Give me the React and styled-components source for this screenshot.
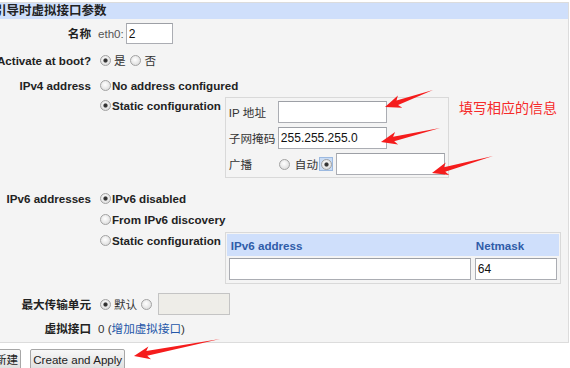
import React from 'react';
import styled, { createGlobalStyle, css } from 'styled-components';

const GlobalStyle = createGlobalStyle`
  html, body { margin: 0; padding: 0; background: #fff; }
  body {
    font-family: "Liberation Sans", Arial, "Noto Sans CJK SC", sans-serif;
    font-size: 11.6px;
    color: #222;
    overflow: hidden;
  }
  * { box-sizing: border-box; }
`;

const Page = styled.div`
  position: relative;
  width: 570px;
  height: 368px;
  overflow: hidden;
  padding-top: 2px;
`;

const Panel = styled.section`
  margin-left: -8px;
  width: 577px;
  border: 1px solid #dcdcdc;
  background: #f4f4f4;
`;

const Header = styled.div`
  height: 16px;
  line-height: 16px;
  background: #cfdffb;
  font-weight: bold;
  font-size: 12.5px;
  padding-left: 1px;
  white-space: nowrap;
  color: #222;
`;

const Row = styled.div`
  display: flex;
  align-items: ${p => p.$align || 'center'};
  padding: ${p => p.$pt ?? 4}px 0 ${p => p.$pb ?? 4}px;
`;

const Label = styled.div`
  width: 98px;
  flex-shrink: 0;
  display: flex;
  justify-content: flex-end;
  font-weight: bold;
  white-space: nowrap;
  line-height: 17px;
  color: #222;
`;

const Value = styled.div`
  margin-left: 7px;
  display: flex;
  align-items: ${p => p.$align || 'center'};
  line-height: 17px;
  white-space: nowrap;
`;

const Options = styled.div`
  display: flex;
  flex-direction: column;
  gap: ${p => p.$gap}px;
`;

const Option = styled.div`
  display: flex;
  align-items: ${p => p.$top ? 'flex-start' : 'center'};
  line-height: 17px;
  font-weight: ${p => p.$bold ? 'bold' : 'normal'};
`;

const OptionText = styled.span`
  display: inline-flex;
  align-items: center;
  height: 17px;
`;

const Radio = styled.input.attrs({ type: 'radio', readOnly: true })`
  appearance: none;
  -webkit-appearance: none;
  width: 11px;
  height: 11px;
  margin: 0 ${p => p.$mr ?? 2}px 0 ${p => p.$ml ?? 2}px;
  border-radius: 50%;
  border: 1px solid #a2a2a2;
  flex-shrink: 0;
  background: radial-gradient(circle at 45% 40%, #ffffff 0, #f0f0f0 35%, #d4d4d4 100%);
  ${p => p.checked && css`
    background:
      radial-gradient(circle, #2b2b2b 0, #3a3a3a 1.6px, rgba(60,60,60,0) 2.6px),
      radial-gradient(circle at 45% 40%, #ffffff 0, #f0f0f0 35%, #d4d4d4 100%);
  `}
`;

const Focus = styled.span`
  display: inline-flex;
  align-items: center;
  justify-content: center;
  width: 14px;
  height: 14px;
  background: #c9dcf5;
  border: 1px solid #9cb9e0;
  margin-left: ${p => p.$ml}px;
`;

const Plain = styled.span`
  font-weight: normal;
  color: ${p => p.$color || '#333'};
  margin-left: ${p => p.$ml ?? 0}px;
  margin-right: ${p => p.$mr ?? 0}px;
`;

const Field = styled.input.attrs({ readOnly: true })`
  width: ${p => p.$w}px;
  height: ${p => p.$h ?? 22}px;
  margin: 0;
  margin-left: ${p => p.$ml ?? 0}px;
  padding: 0 2px;
  border: 1px solid #abadb3;
  border-top-color: #9da0a6;
  background: ${p => p.$disabled ? '#eeede8' : '#fff'};
  ${p => p.$disabled && css`border-color: #c4c4c4;`}
  font: inherit;
  font-size: 12px;
  color: #111;
  outline: none;
  justify-self: start;
`;

const V4Box = styled.div`
  display: grid;
  grid-template-columns: 49px auto;
  row-gap: 4px;
  align-items: center;
  margin-left: 4px;
  padding: 3px 3px 2px 3px;
  border: 1px solid #d9d9d9;
  font-weight: normal;
  color: #333;
`;

const BoxLabel = styled.span`
  line-height: 17px;
`;

const BcastCell = styled.div`
  display: flex;
  align-items: center;
`;

const V6Box = styled.div`
  margin-left: 4px;
  padding: 1px;
  border: 1px solid #d9d9d9;
  font-weight: normal;
`;

const V6Head = styled.div`
  display: grid;
  grid-template-columns: 249px 1fr;
  height: 22px;
  align-items: center;
  background: #cfdffb;
  color: #2f5ca8;
  font-weight: bold;
`;

const HeadCell = styled.span`
  padding-left: ${p => p.$pl}px;
`;

const V6Inputs = styled.div`
  display: grid;
  grid-template-columns: 242px 82px;
  column-gap: 4px;
  padding: 2px;
`;

const Link = styled.a`
  color: #2456a8;
  text-decoration: none;
`;

const ButtonRow = styled.div`
  display: flex;
  gap: 9px;
  margin-top: 6px;
  margin-left: -8px;
`;

const Button = styled.button`
  height: 22px;
  padding: 0 2px;
  border: 1px solid #a7a7a7;
  border-radius: 2px;
  background: linear-gradient(#f7f7f7, #dedede);
  font: inherit;
  font-size: 11.6px;
  color: #222;
  line-height: 20px;
`;

const Note = styled.div`
  position: absolute;
  left: 459px;
  top: 97px;
  font-family: "Noto Sans CJK SC", sans-serif;
  font-size: 14px;
  line-height: 20px;
  color: #f62a2a;
  white-space: nowrap;
`;

const Overlay = styled.svg`
  position: absolute;
  left: 0;
  top: 0;
  pointer-events: none;
`;

function arrowPoints(tx, ty, px, py) {
  const dx = px - tx, dy = py - ty;
  const L = Math.hypot(dx, dy);
  const ux = dx / L, uy = dy / L;
  const nx = -uy, ny = ux;
  const at = (d, w) => [tx + ux * d + nx * w, ty + uy * d + ny * w];
  const pts = [
    [tx, ty],
    at(L - 13, 2.4),
    at(L - 16, 6.5),
    [px, py],
    at(L - 16, -6.5),
    at(L - 13, -2.4),
  ];
  return pts.map(p => p.map(v => v.toFixed(1)).join(',')).join(' ');
}

const arrows = [
  [433, 90, 385, 107],
  [440, 128, 381, 142],
  [493, 156, 432, 173],
  [220, 339, 134, 356],
];

export default function App() {
  return (
    <Page>
      <GlobalStyle />
      <Panel>
        <Header>引导时虚拟接口参数</Header>

        <Row>
          <Label>名称</Label>
          <Value>
            <Plain $color="#555" $mr={2}>eth0:</Plain>
            <Field $w={47} $h={21} defaultValue="2" />
          </Value>
        </Row>

        <Row>
          <Label>Activate at boot?</Label>
          <Value>
            <Radio checked />
            <Plain $ml={1}>是</Plain>
            <Radio $ml={4} />
            <Plain $ml={2}>否</Plain>
          </Value>
        </Row>

        <Row $align="flex-start">
          <Label>IPv4 address</Label>
          <Value $align="flex-start">
            <Options $gap={3}>
              <Option $bold>
                <Radio $mr={1} />
                <OptionText>No address configured</OptionText>
              </Option>
              <Option $bold $top>
                <OptionText>
                  <Radio $mr={1} checked />
                  Static configuration
                </OptionText>
                <V4Box>
                  <BoxLabel>IP 地址</BoxLabel>
                  <Field $w={109} defaultValue="" />
                  <BoxLabel>子网掩码</BoxLabel>
                  <Field $w={109} defaultValue="255.255.255.0" />
                  <BoxLabel>广播</BoxLabel>
                  <BcastCell>
                    <Radio $ml={1} $mr={0} />
                    <Plain $ml={5}>自动</Plain>
                    <Focus $ml={1}>
                      <Radio $ml={0} $mr={0} checked />
                    </Focus>
                    <Field $w={109} $ml={3} defaultValue="" />
                  </BcastCell>
                </V4Box>
              </Option>
            </Options>
          </Value>
        </Row>

        <Row $align="flex-start" $pt={8}>
          <Label>IPv6 addresses</Label>
          <Value $align="flex-start">
            <Options $gap={4}>
              <Option $bold>
                <Radio $mr={1} checked />
                <OptionText>IPv6 disabled</OptionText>
              </Option>
              <Option $bold>
                <Radio $mr={1} />
                <OptionText>From IPv6 discovery</OptionText>
              </Option>
              <Option $bold $top>
                <OptionText>
                  <Radio $mr={1} />
                  Static configuration
                </OptionText>
                <V6Box>
                  <V6Head>
                    <HeadCell $pl={4}>IPv6 address</HeadCell>
                    <HeadCell $pl={0}>Netmask</HeadCell>
                  </V6Head>
                  <V6Inputs>
                    <Field $w={242} defaultValue="" />
                    <Field $w={82} defaultValue="64" />
                  </V6Inputs>
                </V6Box>
              </Option>
            </Options>
          </Value>
        </Row>

        <Row $pt={5} $pb={5}>
          <Label>最大传输单元</Label>
          <Value>
            <Radio checked />
            <Plain $ml={1}>默认</Plain>
            <Radio $ml={4} />
            <Field $w={72} $ml={4} $disabled defaultValue="" />
          </Value>
        </Row>

        <Row $pt={0} $pb={5}>
          <Label>虚拟接口</Label>
          <Value>
            <Plain>0 (</Plain>
            <Link href="#">增加虚拟接口</Link>
            <Plain>)</Plain>
          </Value>
        </Row>
      </Panel>

      <ButtonRow>
        <Button>新建</Button>
        <Button>Create and Apply</Button>
      </ButtonRow>

      <Note>填写相应的信息</Note>

      <Overlay width="570" height="368" viewBox="0 0 570 368">
        {arrows.map((a, i) => (
          <polygon key={i} points={arrowPoints(...a)} fill="#f51c1c" />
        ))}
      </Overlay>
    </Page>
  );
}
